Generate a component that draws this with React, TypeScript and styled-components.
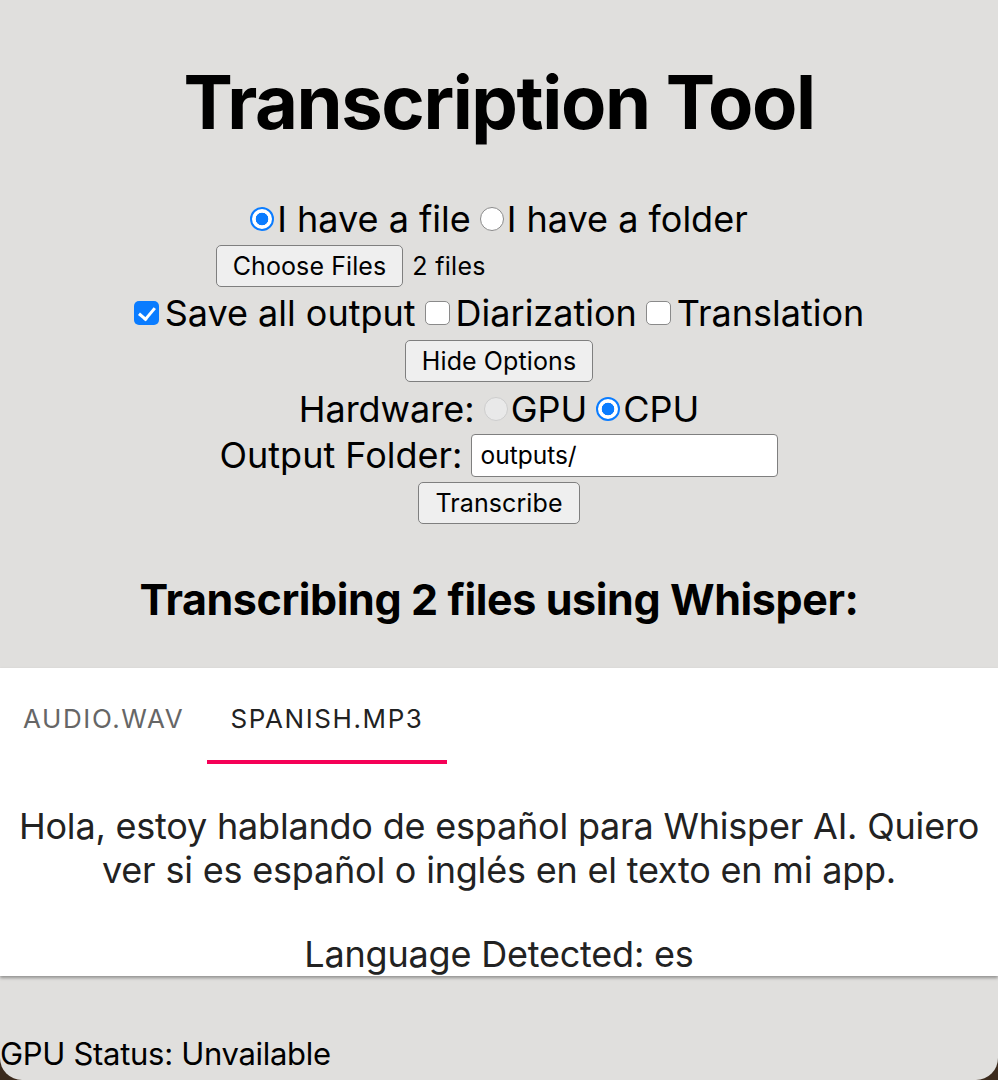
import React, { useState } from "react";
import styled, { createGlobalStyle } from "styled-components";

const GlobalStyle = createGlobalStyle`
  html, body {
    margin: 0;
    padding: 0;
    background: #3b2a1c;
  }
  body {
    font-family: Inter, "Noto Sans", "Liberation Sans", sans-serif;
    color: #000;
  }
  * {
    box-sizing: border-box;
  }
`;

const Window = styled.div`
  width: 998px;
  height: 1080px;
  background: #e0dfdd;
  border-radius: 0 0 22px 22px;
  overflow: hidden;
  display: flex;
  flex-direction: column;
`;

const Title = styled.h1`
  margin: 58px 0 0;
  font-size: 74px;
  line-height: 88px;
  font-weight: 700;
  text-align: center;
  letter-spacing: -1.4px;
`;

const Form = styled.form`
  margin-top: 50px;
  display: flex;
  flex-direction: column;
  align-items: center;
`;

const Row = styled.div<{ $h?: number }>`
  height: ${(p) => p.$h ?? 46}px;
  display: flex;
  align-items: center;
  justify-content: center;
  gap: 9px;
  font-size: 36px;
  white-space: pre;
`;

const Label = styled.label`
  display: inline-flex;
  align-items: center;
`;

const Radio = styled.input.attrs({ type: "radio" })`
  appearance: none;
  width: 24px;
  height: 24px;
  margin: 0 3px 0 0;
  border-radius: 50%;
  border: 1.5px solid #8a8a8a;
  background: #fff;
  display: inline-block;
  flex-shrink: 0;

  &:checked {
    border: 2px solid #0a7cff;
    background: radial-gradient(circle, #0a7cff 0 6px, #fff 6.6px);
  }
  &:disabled {
    border: 1.5px solid #cdcdcd;
    background: #e9e9e9;
  }
`;

const Check = styled.input.attrs({ type: "checkbox" })`
  appearance: none;
  width: 25px;
  height: 24px;
  margin: 0 6px 0 0;
  border-radius: 5px;
  border: 1.5px solid #8a8a8a;
  background: #fff;
  position: relative;
  flex-shrink: 0;

  &:checked {
    border: none;
    background: #0a7cff;
  }
  &:checked::after {
    content: "";
    position: absolute;
    left: 8px;
    top: 3px;
    width: 7px;
    height: 13px;
    border: solid #fff;
    border-width: 0 3.5px 3.5px 0;
    transform: rotate(40deg);
  }
`;

const Button = styled.button`
  font-family: inherit;
  font-size: 25px;
  height: 42px;
  padding: 0 16px;
  background: #efefef;
  color: #000;
  border: 1.5px solid #7f7f7f;
  border-radius: 5px;
  letter-spacing: 0.1px;
`;

const FileNote = styled.span`
  width: 370px;
  font-size: 25px;
  letter-spacing: 0.3px;
`;

const TextInput = styled.input`
  font-family: inherit;
  font-size: 24.5px;
  width: 307px;
  height: 43px;
  padding: 0 8px;
  border: 1.5px solid #7f7f7f;
  border-radius: 4px;
  background: #fff;
  color: #000;
`;

const Subtitle = styled.h2`
  margin: 47px 0 0;
  font-size: 43px;
  line-height: 48px;
  font-weight: 700;
  text-align: center;
  letter-spacing: -0.4px;
`;

const Panel = styled.div`
  margin-top: 45px;
  background: #fff;
  box-shadow: 0 2px 3px rgba(0, 0, 0, 0.35);
  height: 308px;
  display: flex;
  flex-direction: column;
`;

const Tabs = styled.div`
  display: flex;
  height: 96px;
`;

const Tab = styled.button<{ $active?: boolean }>`
  font-family: inherit;
  height: 96px;
  padding: 8px 23px 0;
  background: none;
  border: none;
  border-bottom: 4px solid ${(p) => (p.$active ? "#f50057" : "transparent")};
  font-size: 26px;
  font-weight: 400;
  letter-spacing: 1.6px;
  text-transform: uppercase;
  color: ${(p) => (p.$active ? "#222" : "#666")};
`;

const Body = styled.div`
  padding-top: 40px;
  text-align: center;
  font-size: 36px;
  line-height: 44px;
  color: #222;
  letter-spacing: -0.2px;

  p {
    margin: 0 0 40px;
  }
`;

const Status = styled.div`
  margin-top: auto;
  margin-bottom: 6px;
  font-size: 31px;
  line-height: 40px;
  letter-spacing: -0.3px;
`;

const files = ["audio.wav", "spanish.mp3"];

export default function App() {
  const [tab, setTab] = useState(1);

  return (
    <>
      <GlobalStyle />
      <Window>
        <Title>Transcription Tool</Title>
        <Form onSubmit={(e) => e.preventDefault()}>
          <Row>
            <Label>
              <Radio name="src" defaultChecked />I have a file
            </Label>
            <Label>
              <Radio name="src" />I have a folder
            </Label>
          </Row>
          <Row $h={48}>
            <Button type="button">Choose Files</Button>
            <FileNote>2 files</FileNote>
          </Row>
          <Row>
            <Label>
              <Check defaultChecked />
              Save all output
            </Label>
            <Label>
              <Check />
              Diarization
            </Label>
            <Label>
              <Check />
              Translation
            </Label>
          </Row>
          <Row $h={50}>
            <Button type="button">Hide Options</Button>
          </Row>
          <Row>
            Hardware:
            <Label>
              <Radio name="hw" disabled />
              GPU
            </Label>
            <Label>
              <Radio name="hw" defaultChecked />
              CPU
            </Label>
          </Row>
          <Row>
            Output Folder:
            <TextInput defaultValue="outputs/" />
          </Row>
          <Row $h={50}>
            <Button type="submit">Transcribe</Button>
          </Row>
        </Form>
        <Subtitle>Transcribing 2 files using Whisper:</Subtitle>
        <Panel>
          <Tabs>
            {files.map((f, i) => (
              <Tab key={f} $active={tab === i} onClick={() => setTab(i)}>
                {f}
              </Tab>
            ))}
          </Tabs>
          <Body>
            <p>
              Hola, estoy hablando de español para Whisper AI. Quiero
              <br />
              ver si es español o inglés en el texto en mi app.
            </p>
            Language Detected: es
          </Body>
        </Panel>
        <Status>GPU Status: Unvailable</Status>
      </Window>
    </>
  );
}
